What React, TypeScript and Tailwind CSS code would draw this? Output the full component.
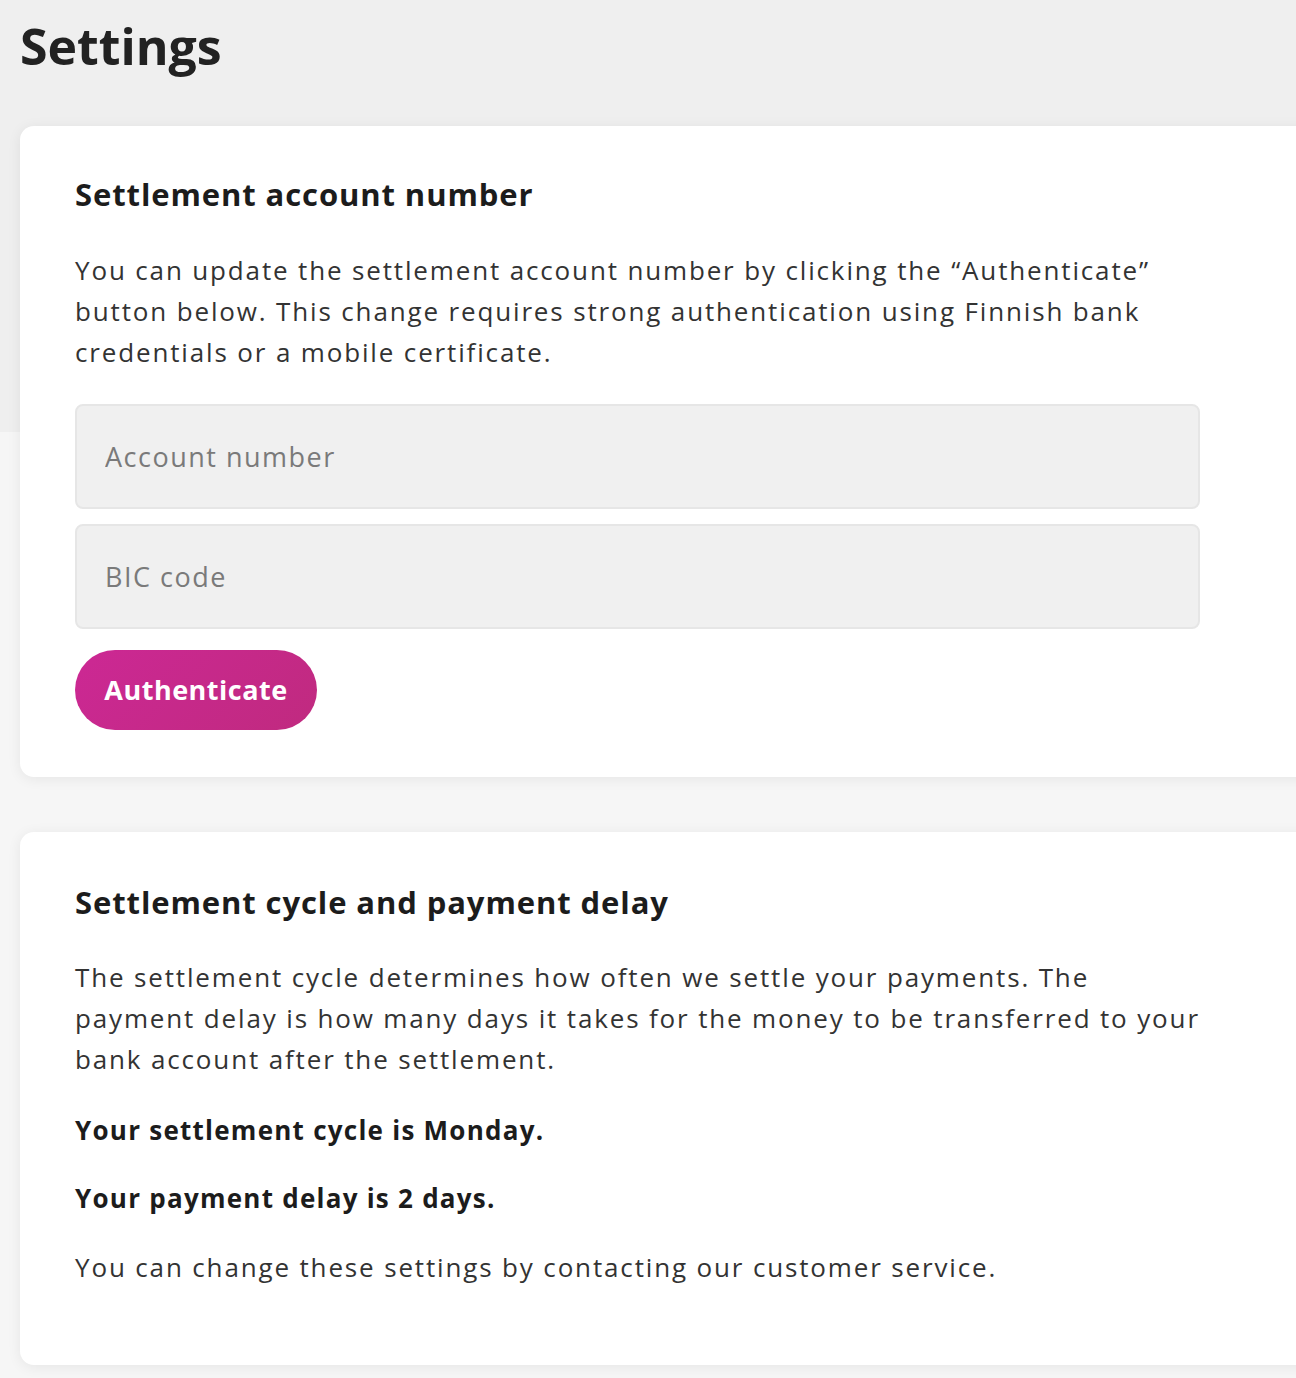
import React from 'react';

const font = { fontFamily: '"Open Sans", "Noto Sans", sans-serif' };

function Field({ placeholder }: { placeholder: string }) {
  return (
    <input
      type="text"
      placeholder={placeholder}
      className="h-[105px] w-full rounded-[8px] border-2 border-[#e6e6e6] bg-[#f0f0f0] pl-[28px] text-[27px] tracking-[1.5px] text-[#333] outline-none placeholder:text-[#7a7a7a]"
    />
  );
}

export default function App() {
  return (
    <div
      style={font}
      className="min-h-[1378px] w-full overflow-hidden bg-[linear-gradient(to_bottom,#efefef_0,#efefef_432px,#f6f6f6_432px)] pt-[16px] text-[#222]"
    >
      <h1 className="pl-[20px] text-[50px] font-bold leading-[60px] text-[#222]">Settings</h1>

      {/* Settlement account */}
      <section className="ml-[20px] mt-[50px] w-[1320px] rounded-[14px] bg-white pl-[55px] pt-[48px] pb-[47px] shadow-[0_2px_14px_rgba(0,0,0,0.07)]">
        <div className="w-[1125px]">
          <h2 className="text-[31px] font-bold leading-[40px] tracking-[0.9px] text-[#1c1c1c]">Settlement account number</h2>
          <p className="mt-[36px] whitespace-nowrap text-[26px] leading-[41px] tracking-[1.85px] text-[#333]">
            You can update the settlement account number by clicking the “Authenticate”
            <br />
            button below. This change requires strong authentication using Finnish bank
            <br />
            credentials or a mobile certificate.
          </p>
          <div className="mt-[31px] flex flex-col gap-[15px]">
            <Field placeholder="Account number" />
            <Field placeholder="BIC code" />
          </div>
          <button className="mt-[21px] h-[80px] w-[242px] rounded-full bg-[linear-gradient(135deg,#cc2894,#c02a7f)] text-[27px] font-bold tracking-[0.5px] text-white">
            Authenticate
          </button>
        </div>
      </section>

      {/* Settlement cycle */}
      <section className="ml-[20px] mt-[55px] w-[1320px] rounded-[14px] bg-white pl-[55px] pt-[50px] pb-[77px] shadow-[0_2px_14px_rgba(0,0,0,0.07)]">
        <div className="w-[1125px]">
          <h2 className="text-[31px] font-bold leading-[40px] tracking-[0.9px] text-[#1c1c1c]">Settlement cycle and payment delay</h2>
          <p className="mt-[35px] whitespace-nowrap text-[26px] leading-[41px] tracking-[1.85px] text-[#333]">
            The settlement cycle determines how often we settle your payments. The
            <br />
            payment delay is how many days it takes for the money to be transferred to your
            <br />
            bank account after the settlement.
          </p>
          <p className="mt-[30px] text-[26px] font-bold leading-[41px] tracking-[1.25px] text-[#1c1c1c]">Your settlement cycle is Monday.</p>
          <p className="mt-[27px] text-[26px] font-bold leading-[41px] tracking-[1.25px] text-[#1c1c1c]">Your payment delay is 2 days.</p>
          <p className="mt-[28px] text-[26px] leading-[41px] tracking-[1.85px] text-[#333]">
            You can change these settings by contacting our customer service.
          </p>
        </div>
      </section>
    </div>
  );
}
